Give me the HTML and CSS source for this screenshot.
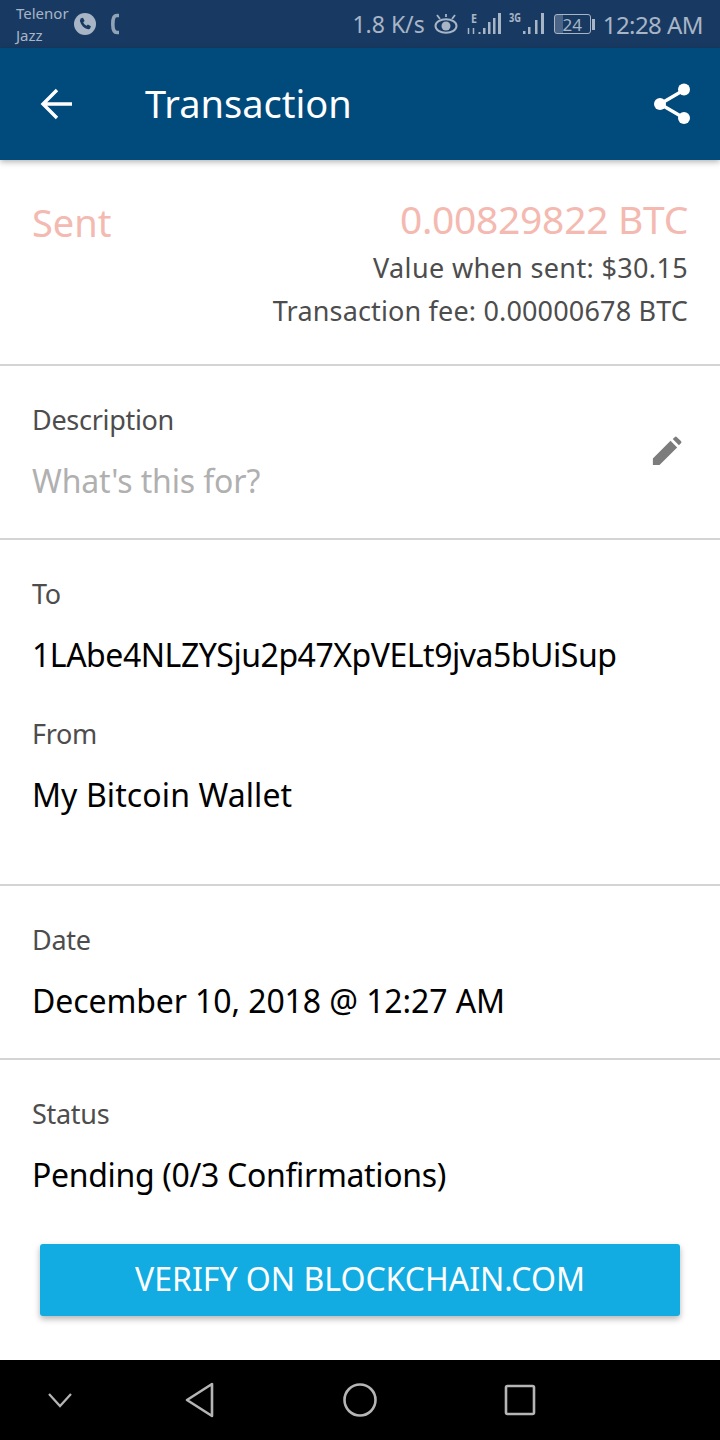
FILE: index.html
```html
<!DOCTYPE html>
<html lang="en">

<head>
    <meta charset="UTF-8">
    <meta name="viewport" content="width=device-width, initial-scale=1.0">
    <title>Transaction</title>
    <link rel="stylesheet" href="styles.css">
</head>

<body>
    <div class="status">
        <div class="carrier">
            <span>Telenor</span>
            <span>Jazz</span>
        </div>
        <svg class="ic-call" width="24" height="24" viewBox="0 0 24 24">
            <circle cx="12" cy="12" r="11" fill="#a8b5c6" />
            <path d="M7.5 6.5l2.5-.8 1.6 3.2-1.4 1.3c.6 1.5 1.7 2.700 3.300 3.500l1.400-1.300 3 1.800-.8 2.400c-.4.700-1.300.9-2.100.7-4-1-6.900-4-8-8-.2-.8 0-1.500.5-1.800z" fill="#183a62" />
        </svg>
        <svg class="ic-wifi" width="10" height="22" viewBox="0 0 10 22">
            <path d="M9 2.500H7C4 2.500 2.800 5 2.800 11S4 19.500 7 19.500h2" fill="none" stroke="#93a3b7" stroke-width="3.600" />
        </svg>
        <div class="status-right">
            <span class="speed">1.8 K/s</span>
            <svg class="ic-eye" width="24" height="20" viewBox="0 0 24 20">
                <ellipse cx="12" cy="12" rx="10.500" ry="6.800" fill="none" stroke="#a8b5c6" stroke-width="2" />
                <circle cx="12" cy="12" r="4.500" fill="#a8b5c6" />
                <path d="M3 1l3 4M21 1l-3 4M12 0v3" stroke="#a8b5c6" stroke-width="1.800" />
            </svg>
            <svg class="ic-signal" width="36" height="30" viewBox="0 0 36 30">
                <text x="5" y="14" class="net-label" textLength="6" lengthAdjust="spacingAndGlyphs">E</text>
                <path d="M2.500 19v6M7.500 19v6" stroke="#a8b5c6" stroke-width="1.500" />
                <path d="M12.500 23h2v2h-2zM17 19h2.500v6H17zM22 13h2.500v12H22zM27 9h2.500v16H27zM32 4h3v21h-3z" fill="#a8b5c6" />
            </svg>
            <svg class="ic-signal signal-3g" width="36" height="30" viewBox="0 0 36 30">
                <text x="1" y="13" class="net-label" textLength="12" lengthAdjust="spacingAndGlyphs">3G</text>
                <path d="M15 22h2.500v3H15zM20 18h2.500v7H20zM27 11h2.500v14H27zM33 4h3v21h-3z" fill="#a8b5c6" />
            </svg>
            <div class="battery">
                <div class="battery-body"><span>24</span></div>
                <div class="battery-tip"></div>
            </div>
            <span class="clock">12:28 AM</span>
        </div>
    </div>

    <header class="toolbar">
        <svg class="ic-back" width="36" height="36" viewBox="0 0 36 36">
            <path d="M33 18H5M18 4L4 18l14 14" fill="none" stroke="#fff" stroke-width="3.400" />
        </svg>
        <h1>Transaction</h1>
        <svg class="ic-share" width="40" height="42" viewBox="0 0 40 42">
            <path d="M32 7L8 21l24 14" fill="none" stroke="#fff" stroke-width="3.400" />
            <circle cx="32" cy="6.500" r="6" fill="#fff" />
            <circle cx="8" cy="21" r="6" fill="#fff" />
            <circle cx="32" cy="35" r="6" fill="#fff" />
        </svg>
    </header>

    <main>
        <section class="summary">
            <div class="sent">Sent</div>
            <div class="amounts">
                <div class="btc">0.00829822 BTC</div>
                <div class="fiat">Value when sent: $30.15</div>
                <div class="fee">Transaction fee: 0.00000678 BTC</div>
            </div>
        </section>

        <section class="row description">
            <div>
                <div class="label">Description</div>
                <div class="value hint">What's this for?</div>
            </div>
            <svg class="ic-edit" width="30" height="30" viewBox="0 0 34 34">
                <path d="M1 33v-7.500L21 5.500l7.500 7.500L8.500 33zM23.500 3.500l2.500-2.500q1-.8 2 0l5 5q.8 1 0 2l-2.500 2.500z" fill="#7c7c7c" />
            </svg>
        </section>

        <section class="row addresses">
            <div class="label">To</div>
            <div class="value addr">1LAbe4NLZYSju2p47XpVELt9jva5bUiSup</div>
            <div class="label from">From</div>
            <div class="value wallet">My Bitcoin Wallet</div>
        </section>

        <section class="row date">
            <div class="label">Date</div>
            <div class="value when">December 10, 2018 @ 12:27 AM</div>
        </section>

        <section class="row status-row">
            <div class="label">Status</div>
            <div class="value pending">Pending (0/3 Confirmations)</div>
            <button class="verify">VERIFY ON BLOCKCHAIN.COM</button>
        </section>
    </main>

    <nav class="navbar">
        <svg width="28" height="18" viewBox="0 0 28 18">
            <path d="M3 3l11 12L25 3" fill="none" stroke="#b5b5b5" stroke-width="2.200" />
        </svg>
        <svg width="32" height="36" viewBox="0 0 32 36">
            <path d="M28 2v32L3 18z" fill="none" stroke="#b5b5b5" stroke-width="2.600" stroke-linejoin="round" />
        </svg>
        <svg width="36" height="36" viewBox="0 0 36 36">
            <circle cx="18" cy="18" r="15.500" fill="none" stroke="#b5b5b5" stroke-width="2.600" />
        </svg>
        <svg width="32" height="32" viewBox="0 0 32 32">
            <rect x="2" y="2" width="28" height="28" rx="1.500" fill="none" stroke="#b5b5b5" stroke-width="2.600" />
        </svg>
    </nav>
</body>

</html>
```

FILE: styles.css
```css
* {
    box-sizing: border-box;
}

body {
    margin: 0;
    width: 720px;
    height: 1440px;
    display: flex;
    flex-direction: column;
    background: #fff;
    font-family: "Noto Sans", "Open Sans", sans-serif;
    overflow: hidden;
}

.status {
    height: 48px;
    padding: 0 17px 0 16px;
    display: flex;
    align-items: center;
    background: #183a62;
    color: #a8b5c6;
}

.carrier {
    width: 58px;
    display: flex;
    flex-direction: column;
    font-size: 15px;
    line-height: 22px;
}

.ic-call {
    margin-left: -1px;
}

.ic-wifi {
    margin-left: 13px;
}

.status-right {
    margin-left: auto;
    display: flex;
    align-items: center;
}

.speed,
.clock {
    white-space: nowrap;
}

.speed {
    font-size: 23px;
}

.clock {
    margin-left: 8px;
    font-size: 24px;
    letter-spacing: -0.55px;
}

.ic-eye {
    margin-left: 9px;
}

.ic-signal {
    margin-left: 8px;
}

.signal-3g {
    margin-left: 6px;
}

.net-label {
    font-size: 12px;
    font-weight: bold;
    fill: #a8b5c6;
}

.battery {
    margin-left: 10px;
    display: flex;
    align-items: center;
    gap: 1px;
}

.battery-body {
    width: 37px;
    height: 20px;
    display: flex;
    align-items: center;
    justify-content: center;
    border: 1.500px solid #a8b5c6;
    border-radius: 3px;
    background: linear-gradient(to right, #4c6485 24%, transparent 24%);
    font-size: 17px;
}

.battery-tip {
    width: 3px;
    height: 11px;
    background: #a8b5c6;
}

.toolbar {
    height: 112px;
    padding: 0 28px 0 39px;
    display: flex;
    align-items: center;
    background: #004a7c;
    box-shadow: 0 2px 6px rgba(0, 0, 0, 0.3);
    position: relative;
}

.toolbar h1 {
    margin: 0 0 2px 70px;
    flex: 1;
    color: #fff;
    font-size: 38px;
    font-weight: 400;
}

main {
    flex: 1;
}

.summary {
    height: 206px;
    padding: 35px 32px 0 32px;
    display: flex;
    justify-content: space-between;
    border-bottom: 2px solid #d4d4d4;
}

.sent {
    margin-top: 1px;
    color: #f4b9b0;
    font-size: 38px;
}

.amounts {
    text-align: right;
}

.btc {
    margin-bottom: 3px;
    color: #f4b9b0;
    font-size: 39px;
    letter-spacing: -0.3px;
    line-height: 48px;
}

.fiat,
.fee {
    color: #4d4d4d;
    font-size: 27px;
    line-height: 43px;
}

.fiat {
    letter-spacing: 0.35px;
}

.fee {
    letter-spacing: 0.16px;
}

.row {
    padding: 0 32px;
    border-bottom: 2px solid #d4d4d4;
}

.label {
    padding-top: 35px;
    color: #4d4d4d;
    font-size: 27px;
    letter-spacing: -0.3px;
    line-height: 38px;
}

.value {
    margin-top: 23px;
    color: #000;
    font-size: 32px;
    line-height: 38px;
}

.hint {
    color: #b0b0b0;
    letter-spacing: -0.13px;
}

.addr {
    letter-spacing: -0.47px;
}

.wallet {
    letter-spacing: 0.1px;
}

.when {
    letter-spacing: -0.1px;
}

.pending {
    letter-spacing: -0.33px;
}

.description {
    height: 174px;
    display: flex;
    justify-content: space-between;
    align-items: flex-start;
}

.ic-edit {
    margin-top: 70px;
    margin-right: 6px;
}

.addresses {
    height: 346px;
}

.from {
    padding-top: 41px;
}

.date {
    height: 174px;
}

.status-row {
    height: 300px;
    border-bottom: none;
}

.verify {
    width: 640px;
    height: 72px;
    margin: 50px 0 0 8px;
    padding: 0 0 3px;
    display: block;
    border: none;
    border-radius: 3px;
    background: #12ace3;
    box-shadow: 0 3px 6px rgba(0, 0, 0, 0.3);
    color: #fff;
    font-family: inherit;
    font-size: 32px;
}

.navbar {
    height: 80px;
    display: grid;
    grid-template-columns: 120px 160px 160px 160px;
    justify-items: center;
    align-items: center;
    background: #000;
}
```
